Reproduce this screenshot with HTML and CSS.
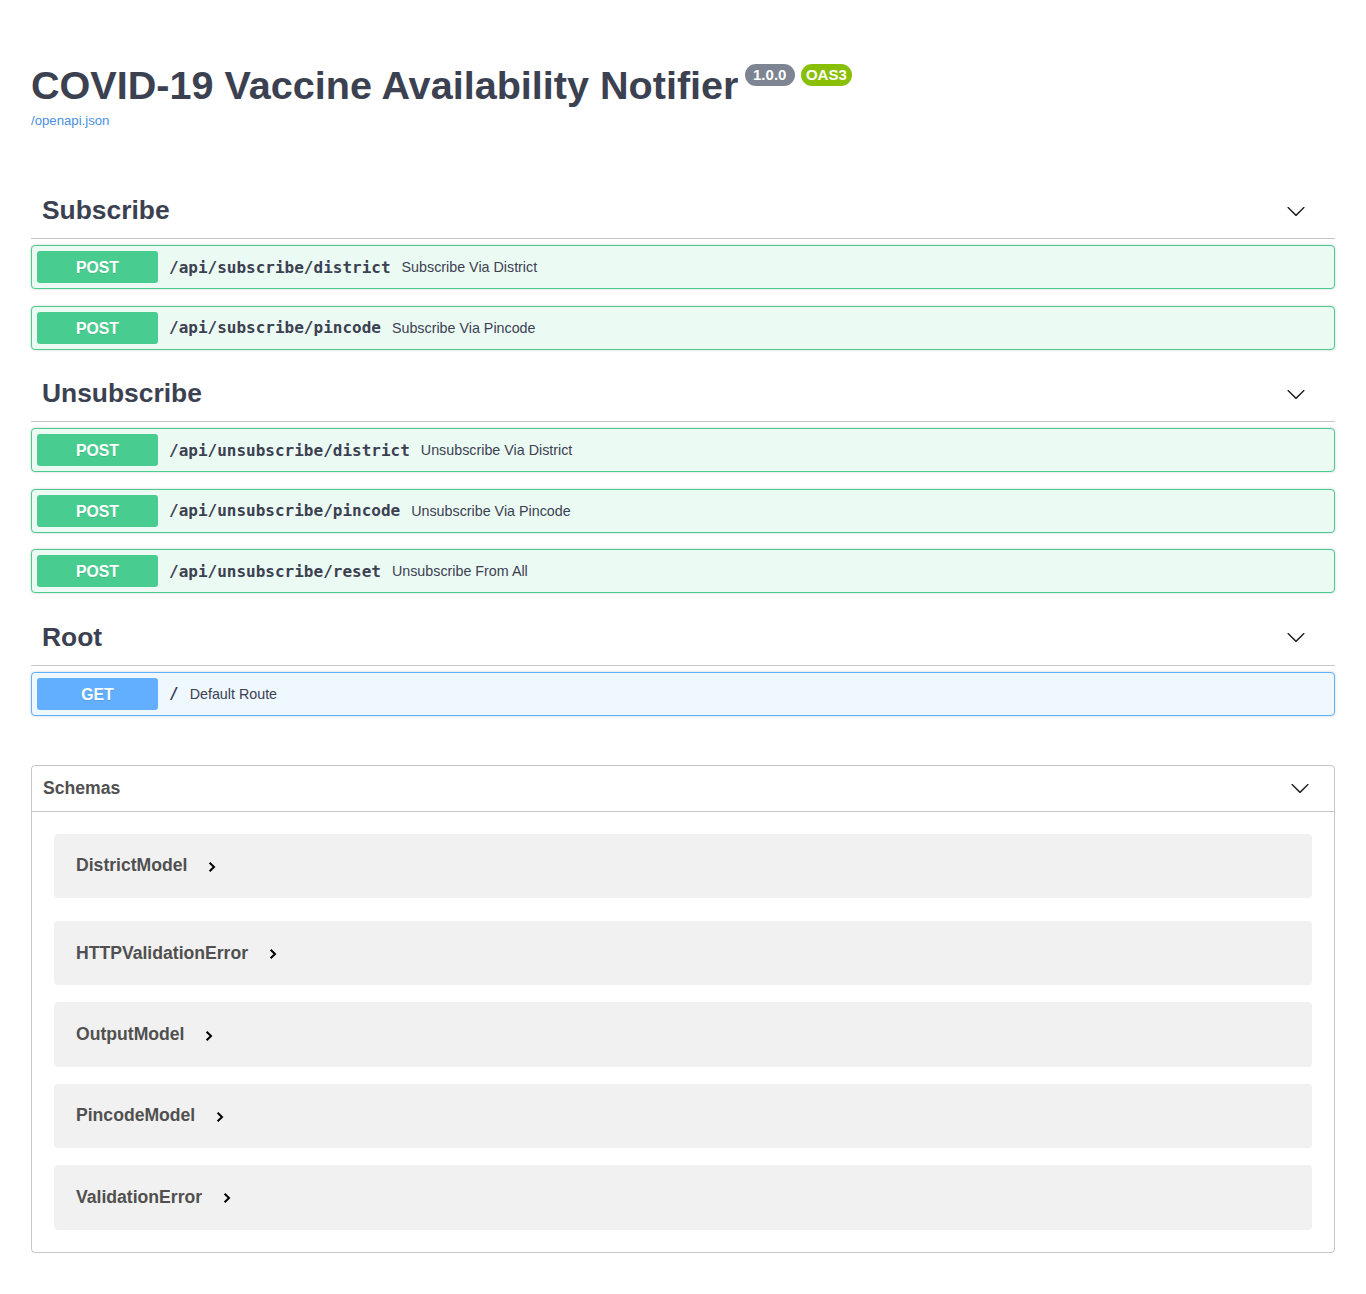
FILE: index.html
```html
<!DOCTYPE html>
<html lang="en">
<head>
<meta charset="utf-8">
<title>COVID-19 Vaccine Availability Notifier - Swagger UI</title>
<link rel="stylesheet" href="styles.css">
</head>
<body>
<svg class="defs" width="0" height="0" aria-hidden="true">
  <defs>
    <symbol id="large-arrow-down" viewBox="0 0 20 20"><path d="M17.418 6.109c.272-.268.709-.268.979 0s.271.701 0 .969l-7.908 7.83c-.27.268-.707.268-.979 0l-7.908-7.83c-.27-.268-.27-.701 0-.969.271-.268.709-.268.979 0L10 13.25l7.418-7.141z"/></symbol>
    <symbol id="small-arrow-right" viewBox="0 0 8 12"><polyline points="1.6,1.8 6,6 1.6,10.2" fill="none" stroke="#000" stroke-width="2"/></symbol>
  </defs>
</svg>
<div class="wrapper">
  <div class="info">
    <h2 class="title">COVID-19 Vaccine Availability Notifier<span class="badge version">1.0.0</span><span class="badge oas">OAS3</span></h2>
    <a class="url" href="#">/openapi.json</a>
  </div>

  <section class="tag-section">
    <h3 class="tag"><span class="tag-name">Subscribe</span><svg class="arrow" width="20" height="20"><use href="#large-arrow-down"/></svg></h3>
    <div class="opblock post">
      <span class="method">POST</span>
      <span class="path">/api/subscribe/district</span>
      <span class="desc">Subscribe Via District</span>
    </div>
    <div class="opblock post">
      <span class="method">POST</span>
      <span class="path">/api/subscribe/pincode</span>
      <span class="desc">Subscribe Via Pincode</span>
    </div>
  </section>

  <section class="tag-section">
    <h3 class="tag"><span class="tag-name">Unsubscribe</span><svg class="arrow" width="20" height="20"><use href="#large-arrow-down"/></svg></h3>
    <div class="opblock post">
      <span class="method">POST</span>
      <span class="path">/api/unsubscribe/district</span>
      <span class="desc">Unsubscribe Via District</span>
    </div>
    <div class="opblock post">
      <span class="method">POST</span>
      <span class="path">/api/unsubscribe/pincode</span>
      <span class="desc">Unsubscribe Via Pincode</span>
    </div>
    <div class="opblock post">
      <span class="method">POST</span>
      <span class="path">/api/unsubscribe/reset</span>
      <span class="desc">Unsubscribe From All</span>
    </div>
  </section>

  <section class="tag-section">
    <h3 class="tag"><span class="tag-name">Root</span><svg class="arrow" width="20" height="20"><use href="#large-arrow-down"/></svg></h3>
    <div class="opblock get">
      <span class="method">GET</span>
      <span class="path">/</span>
      <span class="desc">Default Route</span>
    </div>
  </section>

  <section class="models">
    <h4 class="models-head"><span>Schemas</span><svg class="arrow" width="20" height="20"><use href="#large-arrow-down"/></svg></h4>
    <div class="models-body">
      <div class="model first"><span class="model-title">DistrictModel</span><svg class="toggle" width="8" height="12"><use href="#small-arrow-right"/></svg></div>
      <div class="model"><span class="model-title">HTTPValidationError</span><svg class="toggle" width="8" height="12"><use href="#small-arrow-right"/></svg></div>
      <div class="model"><span class="model-title">OutputModel</span><svg class="toggle" width="8" height="12"><use href="#small-arrow-right"/></svg></div>
      <div class="model"><span class="model-title">PincodeModel</span><svg class="toggle" width="8" height="12"><use href="#small-arrow-right"/></svg></div>
      <div class="model"><span class="model-title">ValidationError</span><svg class="toggle" width="8" height="12"><use href="#small-arrow-right"/></svg></div>
    </div>
  </section>
</div>
</body>
</html>
```

FILE: styles.css
```css
* {
  box-sizing: border-box;
}

html, body {
  margin: 0;
  padding: 0;
  background: #fff;
}

body {
  font-family: "Liberation Sans", Arial, sans-serif;
  color: #3b4151;
}

.defs {
  position: absolute;
  width: 0;
  height: 0;
  overflow: hidden;
}

.wrapper {
  padding: 63px 31px 41px;
}

/* ---------- info ---------- */
.info {
  margin-bottom: 55.6px;
}

.title {
  display: flex;
  align-items: flex-start;
  margin: 0;
  font-size: 39.6px;
  line-height: 45.5px;
  font-weight: 700;
  color: #3b4151;
}

.badge {
  display: inline-block;
  margin-top: 1px;
  margin-left: 6px;
  height: 22px;
  padding: 0 8.5px;
  border-radius: 12px;
  font-size: 15px;
  line-height: 22px;
  font-weight: 700;
  color: #fff;
}

.badge.version {
  background: #7d8492;
}

.badge.oas {
  background: #89bf04;
  padding: 0 5px;
}

.url {
  display: block;
  margin-top: 4px;
  font-size: 13.2px;
  line-height: 15px;
  color: #4990e2;
  text-decoration: none;
}

/* ---------- tag sections ---------- */
.tag {
  display: flex;
  align-items: center;
  justify-content: space-between;
  height: 56px;
  margin: 0 0 6px;
  padding: 0 29px 0 11px;
  border-bottom: 1px solid rgba(59, 65, 81, .3);
  font-size: 26.4px;
  font-weight: 700;
  color: #3b4151;
}

.arrow {
  display: block;
  fill: #222;
}

.opblock {
  display: flex;
  align-items: center;
  height: 44px;
  margin-bottom: 16.5px;
  padding: 5px;
  border: 1px solid;
  border-radius: 4px;
  box-shadow: 0 0 3px rgba(0, 0, 0, .19);
}

.opblock.post {
  border-color: #49cc90;
  background: #ecfaf4;
}

.opblock.get {
  border-color: #61affe;
  background: #eff7ff;
}

.method {
  flex: none;
  width: 121px;
  height: 32px;
  border-radius: 3px;
  font-size: 15.8px;
  line-height: 33px;
  font-weight: 700;
  text-align: center;
  color: #fff;
  text-shadow: 0 1px 0 rgba(0, 0, 0, .1);
}

.post .method {
  background: #49cc90;
}

.get .method {
  background: #61affe;
}

.path {
  padding: 0 11px;
  font-family: "DejaVu Sans Mono", "Liberation Mono", monospace;
  font-size: 16px;
  font-weight: 700;
  color: #3b4151;
}

.desc {
  font-size: 14.3px;
  color: #3b4151;
}

/* ---------- schemas ---------- */
.models {
  margin-top: 49px;
  border: 1px solid rgba(59, 65, 81, .3);
  border-radius: 4px;
}

.models-head {
  display: flex;
  align-items: center;
  justify-content: space-between;
  height: 46px;
  margin: 0;
  padding: 0 24px 0 11px;
  border-bottom: 1px solid rgba(59, 65, 81, .3);
  font-size: 17.6px;
  font-weight: 700;
  color: #505050;
}

.models-body {
  padding: 22px 22px 22.5px;
}

.model {
  display: flex;
  align-items: center;
  gap: 21px;
  height: 64.4px;
  margin-bottom: 17px;
  padding: 0 22px;
  border-radius: 4px;
  background: rgba(0, 0, 0, .055);
}

.model.first {
  margin-bottom: 23px;
}

.model:last-child {
  margin-bottom: 0;
}

.model-title {
  font-size: 17.6px;
  font-weight: 700;
  color: #505050;
}

.toggle {
  display: block;
  margin-top: 2px;
}
```
